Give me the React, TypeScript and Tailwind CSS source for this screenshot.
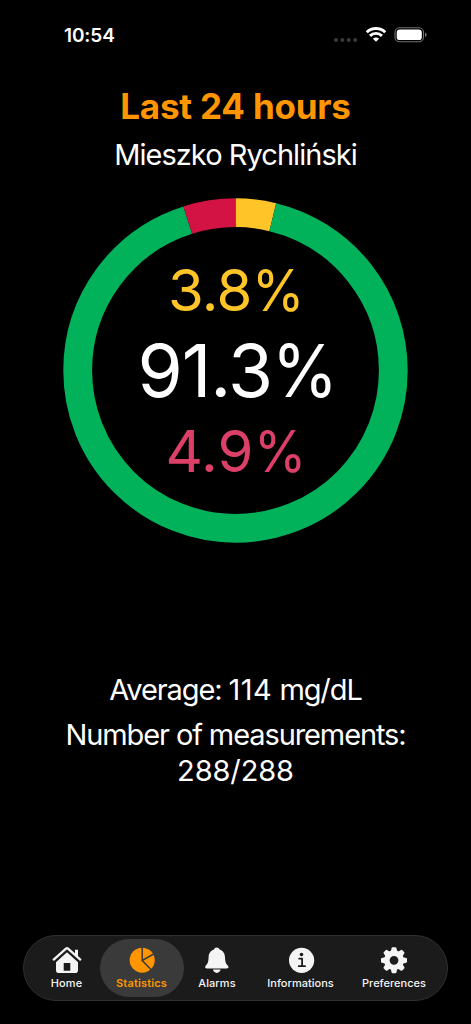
import type { ReactNode } from "react";

const segments = [
  { name: "high", value: 3.8, color: "#ffc528" },
  { name: "in range", value: 91.3, color: "#02b25b" },
  { name: "low", value: 4.9, color: "#d21343" },
];

function StatusBar() {
  return (
    <header className="flex h-[70px] items-center justify-between pl-[64px] pr-[43px]">
      <span className="pt-px text-[19px] leading-6 font-semibold tracking-[-0.1px]">
        10:54
      </span>
      <div className="flex items-center">
        <svg width="24" height="18" viewBox="0 0 24 18" fill="#3b3b3d">
          <circle cx="2" cy="14" r="2" />
          <circle cx="8.4" cy="14" r="2" />
          <circle cx="14.8" cy="14" r="2" />
          <circle cx="21.2" cy="14" r="2" />
        </svg>
        <svg className="ml-[7px]" width="22" height="18" viewBox="0 0 22 18">
          <g fill="none" stroke="#fff" strokeWidth="2.9">
            <path d="M1.8 6.3a13.2 13.2 0 0 1 18.4 0" />
            <path d="M5 9.9a8.5 8.5 0 0 1 12 0" />
          </g>
          <path
            d="M7.9 12.7a4.4 4.4 0 0 1 6.2 0l-2.6 2.6a.7.7 0 0 1-1 0z"
            fill="#fff"
          />
        </svg>
        <svg className="ml-[7px]" width="34" height="18" viewBox="0 0 34 18">
          <rect
            x="1"
            y="1.8"
            width="28.5"
            height="14"
            rx="4.6"
            fill="none"
            stroke="#727272"
            strokeWidth="1.1"
          />
          <rect x="2.7" y="3.5" width="25.1" height="10.6" rx="3.2" fill="#fff" />
          <path d="M31 6.6q1.8.7 1.8 2.2T31 11z" fill="#727272" />
        </svg>
      </div>
    </header>
  );
}

function Donut() {
  let start = 0;
  return (
    <svg width="345" height="345" viewBox="0 0 345 345" className="-rotate-90">
      {segments.map(({ name, value, color }) => {
        const offset = -start;
        start += value;
        return (
          <circle
            key={name}
            cx="172.5"
            cy="172.5"
            r="157.8"
            fill="none"
            stroke={color}
            strokeWidth="28.8"
            pathLength={100}
            strokeDasharray={`${value} ${100 - value}`}
            strokeDashoffset={offset}
          />
        );
      })}
    </svg>
  );
}

function Percent({ value, className }: { value: number; className: string }) {
  return (
    <span className={className}>
      {value}
      <span className="inline-block origin-left scale-x-[0.92]">%</span>
    </span>
  );
}

function HomeIcon() {
  return (
    <svg width="30" height="28" viewBox="0 0 30 28">
      <path
        fill="currentColor"
        fillRule="evenodd"
        d="M15 5.3 26 15v9.2q0 2.8-2.8 2.8H6.8Q4 27 4 24.2V15zM11.7 16.9v7.8h6.6v-7.8z"
      />
      <path d="M23 3.8h3v8L23 9z" fill="currentColor" />
      <path
        d="M2.5 15.7 15 4.6l12.5 11.1"
        fill="none"
        stroke="#1b1b1b"
        strokeWidth="2.6"
      />
      <path
        d="M1.7 13.6 14 2.7q1-.9 2 0l12.3 10.9"
        fill="none"
        stroke="currentColor"
        strokeWidth="2.3"
        strokeLinecap="round"
        strokeLinejoin="round"
      />
    </svg>
  );
}

function PieIcon() {
  return (
    <svg width="28" height="28" viewBox="0 0 28 28">
      <circle cx="14.2" cy="14.2" r="12.5" fill="currentColor" />
      <path
        d="M14.2 0v14.4L27.5 7M14.2 14.4 24.5 25"
        fill="none"
        stroke="#3a3a3a"
        strokeWidth="1.5"
      />
    </svg>
  );
}

function BellIcon() {
  return (
    <svg width="28" height="28" viewBox="0 0 28 28" fill="currentColor">
      <path d="M13.8 1.4c1.6 0 2.4.9 2.8 2.2 3.7 1.2 5.2 4.1 5.4 7.6.2 4.8.9 6.3 2.5 8 .7.8 1 1.2 1 1.8 0 .9-.6 1.4-1.7 1.4h-20c-1.1 0-1.7-.5-1.7-1.4 0-.6.3-1 1-1.8 1.6-1.7 2.3-3.2 2.5-8 .2-3.5 1.7-6.4 5.4-7.6.4-1.3 1.2-2.2 2.8-2.2z" />
      <path d="M10 23.6h7.6c-.2 1.9-1.7 3.3-3.8 3.3s-3.6-1.4-3.8-3.3z" />
    </svg>
  );
}

function InfoIcon() {
  return (
    <svg width="28" height="28" viewBox="0 0 28 28">
      <circle cx="14.6" cy="14.3" r="12.6" fill="currentColor" />
      <circle cx="14.5" cy="8.5" r="1.8" fill="#1b1b1b" />
      <path
        d="M12.2 12.7h2.9v7.4M11.8 20.2H18"
        fill="none"
        stroke="#1b1b1b"
        strokeWidth="1.8"
        strokeLinecap="round"
        strokeLinejoin="round"
      />
    </svg>
  );
}

function GearIcon() {
  return (
    <svg width="28" height="28" viewBox="0 0 28 28" fill="currentColor">
      <circle cx="14" cy="14.3" r="7.2" fill="none" stroke="currentColor" strokeWidth="5.6" />
      {[0, 45, 90, 135, 180, 225, 270, 315].map((angle) => (
        <path
          key={angle}
          transform={`rotate(${angle} 14 14.3)`}
          d="M10.6 6.3 11.6 2q.2-.7.9-.7h3q.7 0 .9.7l1 4.3z"
        />
      ))}
    </svg>
  );
}

const tabs: { label: string; icon: ReactNode; className: string }[] = [
  {
    label: "Home",
    icon: <HomeIcon />,
    className: "w-[66px] font-medium tracking-[0.1px]",
  },
  {
    label: "Statistics",
    icon: <PieIcon />,
    className:
      "w-[84px] rounded-[29px] bg-[#3a3a3a] font-semibold tracking-[0.15px] text-[#ff9500]",
  },
  {
    label: "Alarms",
    icon: <BellIcon />,
    className: "w-[67px] font-medium tracking-[0.1px]",
  },
  {
    label: "Informations",
    icon: <InfoIcon />,
    className: "w-[100px] font-medium tracking-[0.02px]",
  },
  {
    label: "Preferences",
    icon: <GearIcon />,
    className: "w-[87px] font-medium tracking-[0.02px]",
  },
];

function TabBar() {
  return (
    <nav className="mx-[23px] mb-[23px] flex h-[66px] items-center justify-center rounded-full border border-[#303030] bg-[#1b1b1b] text-[#f4f4f4]">
      {tabs.map(({ label, icon, className }) => (
        <button
          key={label}
          className={`flex h-[58px] flex-col items-center pt-[7px] text-[11px] leading-[14px] ${className}`}
        >
          {icon}
          <span className="mt-[2px] whitespace-nowrap">{label}</span>
        </button>
      ))}
    </nav>
  );
}

export default function App() {
  return (
    <div className="flex h-[1024px] w-[471px] flex-col bg-black font-['Inter',sans-serif] text-white">
      <StatusBar />
      <main className="flex flex-1 flex-col items-center text-center whitespace-nowrap">
        <h1 className="mt-[14px] text-[35px] leading-[44px] font-bold tracking-[-0.2px] text-[#ff9500]">
          Last 24 hours
        </h1>
        <p className="mt-[9px] text-[29px] leading-[36px] tracking-[-0.95px]">
          Mieszko Rychliński
        </p>
        <div className="mt-[25px] grid place-items-center *:[grid-area:1/1]">
          <Donut />
          <div className="flex flex-col items-center">
            <Percent
              value={3.8}
              className="pl-[5px] text-[58px] leading-[72px] tracking-[-0.7px] text-[#ffc528]"
            />
            <Percent
              value={91.3}
              className="pl-[9px] text-[73px] leading-[90px] tracking-[-1.2px]"
            />
            <Percent
              value={4.9}
              className="pb-[2px] pl-[5px] text-[58px] leading-[70px] tracking-[0.1px] text-[#dc4069]"
            />
          </div>
        </div>
        <p className="mt-[129px] text-[29px] leading-[36px] tracking-[-1.1px]">
          Average: <span className="tracking-[0.5px]">114</span> mg/dL
        </p>
        <p className="mt-[9px] text-[29px] leading-[36px] tracking-[-1.1px]">
          Number of measurements:
          <br />
          <span className="tracking-[-0.1px]">288/288</span>
        </p>
      </main>
      <TabBar />
    </div>
  );
}
